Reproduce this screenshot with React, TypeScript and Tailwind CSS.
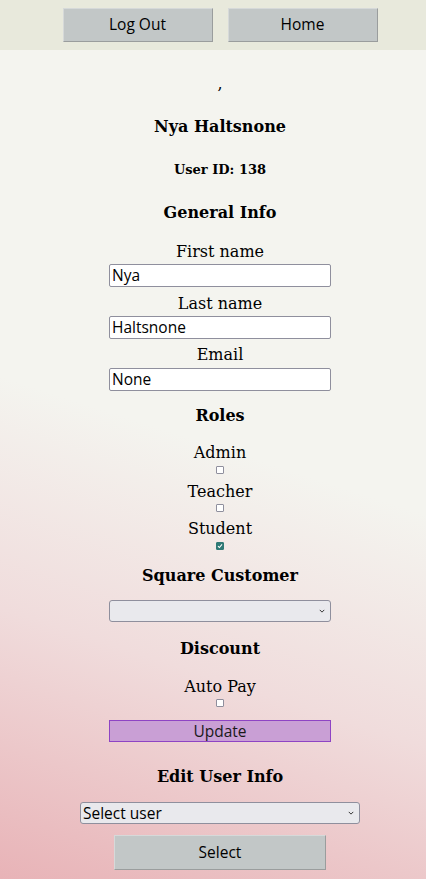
import React from 'react';

const serif = "font-['DejaVu_Serif',serif] text-black";
const sans = "font-['Open_Sans',sans-serif]";

const Heading = ({ children, mt }: { children: React.ReactNode; mt: string }) => (
  <h3 className={`${serif} ${mt} text-[16px] leading-[20px] font-bold`}>{children}</h3>
);

const Label = ({ children, mt }: { children: React.ReactNode; mt: string }) => (
  <p className={`${serif} ${mt} text-[16px] leading-[19px]`}>{children}</p>
);

const Box = ({ checked, mt }: { checked?: boolean; mt: string }) => (
  <span
    className={`${mt} flex h-[8px] w-[8px] items-center justify-center rounded-[1px] border ${
      checked ? 'border-[#2f7a76] bg-[#2f7a76]' : 'border-[#8f8f9d] bg-white'
    }`}
  >
    {checked && (
      <svg viewBox="0 0 8 8" className="h-[6px] w-[6px]">
        <path d="M1.3 4.2 L3.2 6 L6.7 1.8" fill="none" stroke="white" strokeWidth="1.4" />
      </svg>
    )}
  </span>
);

const TextInput = ({ value, mt }: { value: string; mt: string }) => (
  <input
    readOnly
    value={value}
    className={`${sans} ${mt} block h-[23px] w-[222px] rounded-[2px] border border-[#8f8f9d] bg-white px-[2px] text-[15.5px] text-black outline-none`}
  />
);

const Select = ({ text, width, mt }: { text: string; width: string; mt: string }) => (
  <div className={`relative ${mt} ${width}`}>
    <select
      className={`${sans} block h-[22px] w-full appearance-none rounded-[3px] border border-[#8f8f9d] bg-[#e9e9ed] px-[2px] text-[15.5px] leading-[20px] text-black outline-none`}
    >
      <option>{text}</option>
    </select>
    <svg viewBox="0 0 8 5" className="pointer-events-none absolute right-[6px] top-[9px] h-[4px] w-[6px]">
      <path d="M1 1 L4 4 L7 1" fill="none" stroke="#222" strokeWidth="1.2" />
    </svg>
  </div>
);

const NavButton = ({ children }: { children: React.ReactNode }) => (
  <button
    className={`${sans} h-[34px] w-[150px] border border-[#d6d9d9] border-b-[#9a9d9d] border-r-[#9a9d9d] bg-[#c2c7c7] text-[15.5px] text-black`}
  >
    {children}
  </button>
);

const App: React.FC = () => {
  return (
    <div className="flex min-h-screen flex-col">
      <nav className="h-[50px] bg-[#e8e9dc] pl-[14px]">
        <div className="flex justify-center gap-[15px] pt-[8px]">
          <NavButton>Log Out</NavButton>
          <NavButton>Home</NavButton>
        </div>
      </nav>

      <main className="flex-1 bg-[linear-gradient(18deg,#e8b3b7_0%,#f0dcdc_28%,#f4f4ef_52%)] pl-[14px] pb-[9px]">
        <div className="flex flex-col items-center text-center">
          <p className={`${serif} mt-[24px] text-[16px] leading-[19px]`}>,</p>
          <Heading mt="mt-[24px]">Nya Haltsnone</Heading>
          <h5 className={`${serif} mt-[25px] text-[13px] leading-[15px] font-bold`}>User ID: 138</h5>

          <Heading mt="mt-[26px]">General Info</Heading>
          <Label mt="mt-[19px]">First name</Label>
          <TextInput mt="mt-[3px]" value="Nya" />
          <Label mt="mt-[7px]">Last name</Label>
          <TextInput mt="mt-[3px]" value="Haltsnone" />
          <Label mt="mt-[6px]">Email</Label>
          <TextInput mt="mt-[4px]" value="None" />

          <Heading mt="mt-[15px]">Roles</Heading>
          <Label mt="mt-[17px]">Admin</Label>
          <Box mt="mt-[4px]" />
          <Label mt="mt-[8px]">Teacher</Label>
          <Box mt="mt-[3px]" />
          <Label mt="mt-[7px]">Student</Label>
          <Box mt="mt-[4px]" checked />

          <Heading mt="mt-[16px]">Square Customer</Heading>
          <Select mt="mt-[14px]" width="w-[222px]" text="" />

          <Heading mt="mt-[17px]">Discount</Heading>
          <Label mt="mt-[18px]">Auto Pay</Label>
          <Box mt="mt-[3px]" />
          <button
            className={`${sans} mt-[13px] h-[22px] w-[222px] border border-[#8e44c4] bg-[#c99fd5] text-[15.5px] leading-[20px] text-[#1a1a1a]`}
          >
            Update
          </button>

          <Heading mt="mt-[25px]">Edit User Info</Heading>
          <Select mt="mt-[15px]" width="w-[280px]" text="Select user" />
          <button
            className={`${sans} mt-[11px] h-[35px] w-[212px] border border-[#d6d9d9] border-b-[#9a9d9d] border-r-[#9a9d9d] bg-[#c2c7c7] text-[15.5px] text-black`}
          >
            Select
          </button>
        </div>
      </main>
    </div>
  );
};

export default App;
